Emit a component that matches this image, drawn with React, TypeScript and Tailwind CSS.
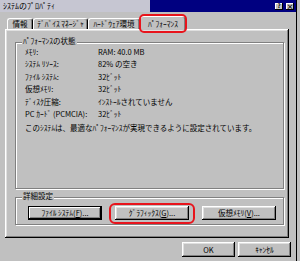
import React from 'react';

const raised =
  'shadow-[inset_-1px_-1px_0_#000,inset_1px_1px_0_#fff,inset_-2px_-2px_0_#808080,inset_2px_2px_0_#dfdfdf]';
const defaultBtn =
  'shadow-[inset_0_0_0_1px_#000,inset_-2px_-2px_0_#000,inset_2px_2px_0_#fff,inset_-3px_-3px_0_#808080]';
const etched = 'border border-[#808080] shadow-[inset_1px_1px_0_#fff,1px_1px_0_#fff]';

const rows: [string, string][] = [
  ['ﾒﾓﾘ:', 'RAM: 40.0 MB'],
  ['ｼｽﾃﾑ ﾘｿｰｽ:', '82% の空き'],
  ['ﾌｧｲﾙ ｼｽﾃﾑ:', '32ﾋﾞｯﾄ'],
  ['仮想ﾒﾓﾘ:', '32ﾋﾞｯﾄ'],
  ['ﾃﾞｨｽｸ圧縮:', 'ｲﾝｽﾄｰﾙされていません'],
  ['PC ｶｰﾄﾞ (PCMCIA):', '32ﾋﾞｯﾄ'],
];

const Tab: React.FC<{ label: string; w: string }> = ({ label, w }) => (
  <div
    className={`${w} h-[11px] flex items-center justify-center border-l border-t border-white border-r border-r-black shadow-[inset_-1px_0_0_#808080] rounded-t-[3px] leading-none`}
  >
    {label}
  </div>
);

const App: React.FC = () => {
  return (
    <div className="w-[300px] h-[261px] bg-[#c0c0c0] overflow-hidden text-black text-[7.5px] font-['Noto_Sans_CJK_JP','Noto_Sans_CJK_SC',sans-serif]">
      <div className="w-[297px] h-full border-r border-black flex flex-col">
        {/* title bar */}
        <div className="h-[12px] flex">
          <div className="w-[150px] bg-[#c6c6d2] pl-[3px] flex items-center text-[8px] leading-none">
            ｼｽﾃﾑのﾌﾟﾛﾊﾟﾃｨ
          </div>
          <div className="flex-1 bg-[#000080] flex items-center justify-end gap-[3px] pr-[2px]">
            <div className="w-[8px] h-[7px] bg-[#c0c0c0] shadow-[inset_-1px_-1px_0_#000,inset_1px_1px_0_#fff] flex items-center justify-center text-[6px] font-bold leading-none">
              ?
            </div>
            <div className="w-[8px] h-[7px] bg-[#c0c0c0] shadow-[inset_-1px_-1px_0_#000,inset_1px_1px_0_#fff] flex items-center justify-center text-[7px] font-bold leading-none">
              ×
            </div>
          </div>
        </div>

        {/* tabs */}
        <div className="h-[17px] flex items-end pl-[7px]">
          <Tab label="情報" w="w-[26px]" />
          <Tab label="ﾃﾞﾊﾞｲｽ ﾏﾈｰｼﾞｬ" w="w-[55px]" />
          <Tab label="ﾊｰﾄﾞｳｪｱ環境" w="w-[52px]" />
          <div className="relative z-10 -mb-[1px] w-[46px] h-[14px] bg-[#c0c0c0] flex items-center justify-center border-l border-t border-white border-r border-r-black shadow-[inset_-1px_0_0_#808080] rounded-t-[3px] leading-none">
            ﾊﾟﾌｫｰﾏﾝｽ
            <div className="absolute -left-[2px] -right-[2px] -top-[3px] -bottom-[3px] border-2 border-[#e8141c] rounded-[5px]" />
          </div>
        </div>

        {/* panel */}
        <div className={`ml-[5px] w-[284px] h-[209px] pt-[13px] pl-[10px] ${raised}`}>
          <div className={`relative w-[269px] h-[147px] pt-[3px] pl-[9px] ${etched}`}>
            <span className="absolute left-[6px] -top-[6px] bg-[#c0c0c0] px-[1px] leading-[8px]">
              ﾊﾟﾌｫｰﾏﾝｽの状態
            </span>
            <div className="grid grid-cols-[73px_1fr]">
              {rows.map(([k, v]) => (
                <React.Fragment key={k}>
                  <div className="h-[12.4px] leading-[12.4px] whitespace-nowrap">{k}</div>
                  <div className="h-[12.4px] leading-[12.4px] whitespace-nowrap">{v}</div>
                </React.Fragment>
              ))}
            </div>
            <div className="mt-[2px] leading-[12.4px] whitespace-nowrap">
              このｼｽﾃﾑは、最適なﾊﾟﾌｫｰﾏﾝｽが実現できるように設定されています。
            </div>
          </div>

          <div className={`relative mt-[8px] w-[269px] h-[28px] pt-[8px] pl-[12px] flex gap-[13px] ${etched}`}>
            <span className="absolute left-[6px] -top-[6px] bg-[#c0c0c0] px-[1px] leading-[8px]">
              詳細設定
            </span>
            <button className={`w-[74px] h-[14px] flex items-center justify-center leading-none ${defaultBtn}`}>
              ﾌｧｲﾙ ｼｽﾃﾑ(<u>F</u>)...
            </button>
            <button className={`relative w-[74px] h-[14px] flex items-center justify-center leading-none ${raised}`}>
              ｸﾞﾗﾌｨｯｸｽ(<u>G</u>)...
              <span className="absolute -left-[6px] -right-[6px] -top-[3px] -bottom-[4px] border-2 border-[#e8141c] rounded-[6px]" />
            </button>
            <button className={`w-[74px] h-[14px] flex items-center justify-center leading-none ${raised}`}>
              仮想ﾒﾓﾘ(<u>V</u>)...
            </button>
          </div>
        </div>

        {/* dialog buttons */}
        <div className="mt-[4px] flex justify-end gap-[3px] pr-[5px]">
          <button className={`w-[53px] h-[15px] flex items-center justify-center leading-none ${raised}`}>OK</button>
          <button className={`w-[53px] h-[15px] flex items-center justify-center leading-none ${raised}`}>ｷｬﾝｾﾙ</button>
        </div>
      </div>
    </div>
  );
};

export default App;
